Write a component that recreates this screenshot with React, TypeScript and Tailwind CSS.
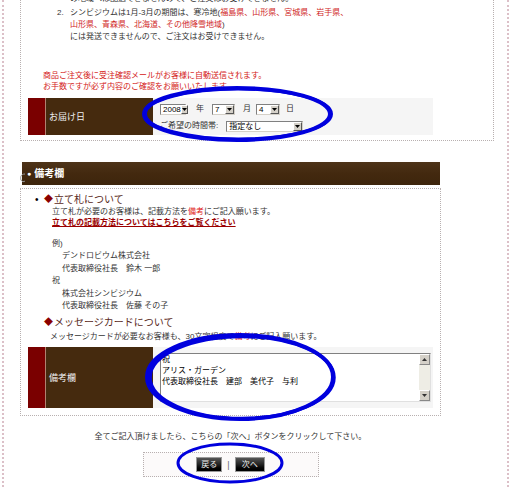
import React from "react";

const Sel = ({ v, w }: { v: string; w: string }) => (
  <span className={`inline-flex h-[11px] ${w} items-stretch border border-[#808080] border-r-[#d4d0c8] border-b-[#d4d0c8] bg-white`}>
    <span className="flex-1 pl-[2px] text-[8px] leading-[9px] text-black">{v}</span>
    <span className="flex w-[9px] items-center justify-center border border-white border-r-[#555] border-b-[#555] bg-[#d4d0c8]">
      <svg width="5" height="3" viewBox="0 0 5 3">
        <path d="M0 0h5L2.5 3z" fill="#000" />
      </svg>
    </span>
  </span>
);

const Heading = ({ children }: { children: React.ReactNode }) => (
  <div className="flex items-center text-[10px] leading-[13px] text-[#5a2a22]">
    <span className="mr-[1px] text-[9px] text-[#8b0000]">◆</span>
    {children}
  </div>
);

const BlackButton = ({ label, w }: { label: string; w: string }) => (
  <span
    className={`flex h-[15px] ${w} items-center justify-center border border-[#999] bg-gradient-to-b from-[#555] via-[#222] to-[#000] text-[8px] text-[#eee]`}
  >
    {label}
  </span>
);

export default function App() {
  return (
    <div className="relative h-[487px] w-[512px] overflow-hidden bg-white font-['Liberation_Sans','Noto_Sans_CJK_JP',sans-serif] text-[8px] leading-[12px] text-[#333]">
      <div className="ml-[2px] min-h-[487px] w-[507px] border-x-2 border-dotted border-[#dcc0c8] pl-[16px]">
        {/* お届け先・注意事項 */}
        <div className="flex h-[141px] w-[474px] flex-col border-x border-b border-dotted border-[#b8b0b0]">
          <div className="-mt-[7px] mb-[2px] pl-[49px]">の地域へは配送できませんので、ご注文はお受けできません。</div>
          <div className="flex pl-[36px]">
            <span className="w-[13px]">2.</span>
            <div>
              <div>
                シンビジウムは1月-3月の期間は、寒冷地(
                <span className="text-[#d02828]">福島県、山形県、宮城県、岩手県、</span>
              </div>
              <div>
                <span className="text-[#d02828]">山形県、青森県、北海道、その他降雪地域</span>)
              </div>
              <div>には発送できませんので、ご注文はお受けできません。</div>
            </div>
          </div>

          <div className="mt-[27px] pl-[22px] leading-[11px] text-[#d42020]">
            <div>商品ご注文後に受注確認メールがお客様に自動送信されます。</div>
            <div>お手数ですが必ず内容のご確認をお願いいたします。</div>
          </div>

          <div className="ml-[7px] mt-[6px] flex h-[37px] w-[405px]">
            <div className="w-[17px] bg-[#7a0000]" />
            <div className="flex w-[108px] items-center border-l border-[#b08070] bg-[#452a0e] pl-[3px] text-[9px] text-[#eee]">
              お届け日
            </div>
            <div className="flex flex-1 flex-col gap-[5px] bg-[#f5f5f5] pl-[7px] pt-[5px]">
              <div className="flex items-center">
                <Sel v="2008" w="w-[26px]" />
                <span className="ml-[10px]">年</span>
                <span className="ml-[8px] flex">
                  <Sel v="7" w="w-[23px]" />
                </span>
                <span className="ml-[8px]">月</span>
                <span className="ml-[5px] flex">
                  <Sel v="4" w="w-[24px]" />
                </span>
                <span className="ml-[6px]">日</span>
              </div>
              <div className="flex items-center">
                <span>ご希望の時間帯:</span>
                <span className="ml-[8px] flex">
                  <Sel v="指定なし" w="w-[77px]" />
                </span>
              </div>
            </div>
          </div>
        </div>

        {/* 備考欄 */}
        <div className="relative ml-[2px] mt-[21px] flex h-[23px] w-[418px] items-center bg-gradient-to-b from-[#4e3419] via-[#43290f] to-[#3d250c] pl-[5px] text-[10px] font-bold text-white">
          <span className="mr-[3px] text-[7px]">●</span>
          備考欄
          <svg className="absolute -left-[3px] top-[11px]" width="7" height="10" viewBox="0 0 7 10">
            <path d="M6 1C2 1 1 4 2 7c1 2 3 2 4 1" fill="none" stroke="#999" strokeWidth="1" />
          </svg>
        </div>
        <div className="mt-[3px] w-[421px] border border-dotted border-[#b8b0b0] pb-[7px] pl-[14px] pt-[4px]">
          <div className="flex">
            <span className="w-[9px] text-[10px] leading-[13px] text-black">•</span>
            <Heading>立て札について</Heading>
          </div>
          <div className="pl-[17px] leading-[11px]">
            <div>
              立て札が必要のお客様は、記載方法を<span className="text-[#e02020]">備考</span>にご記入願います。
            </div>
            <div className="font-bold text-[#9b0000] underline">立て札の記載方法についてはこちらをご覧ください</div>
          </div>
          <div className="mt-[10px] pl-[17px] leading-[12.4px]">
            <div>例)</div>
            <div className="pl-[10px]">デンドロビウム株式会社</div>
            <div className="pl-[10px]">代表取締役社長　鈴木 一郎</div>
            <div>祝</div>
            <div className="pl-[10px]">株式会社シンビジウム</div>
            <div className="pl-[10px]">代表取締役社長　佐藤 その子</div>
          </div>
          <div className="mt-[4px] pl-[9px]">
            <Heading>メッセージカードについて</Heading>
          </div>
          <div className="mt-[2px] pl-[15px] leading-[11px]">
            メッセージカードが必要なお客様も、30文字程度で<span className="text-[#e02020]">備考</span>にご記入願います。
          </div>

          <div className="-ml-[7px] mt-[5px] flex h-[61px] w-[405px]">
            <div className="w-[17px] bg-[#7a0000]" />
            <div className="flex w-[108px] items-center border-l border-[#b08070] bg-[#452a0e] pl-[3px] text-[9px] text-[#eee]">
              備考欄
            </div>
            <div className="flex-1 bg-[#f5f5f5] pl-[7px] pr-[2px] pt-[6px]">
              <div className="flex h-[49px] border border-[#808080] border-r-[#e0e0e0] border-b-[#e0e0e0] bg-white">
                <div className="flex-1 pl-[1px] leading-[11px] text-black">
                  <div>祝</div>
                  <div>アリス・ガーデン</div>
                  <div>代表取締役社長　建部　美代子　与利</div>
                </div>
                <div className="flex w-[11px] flex-col justify-between bg-[#eeede5]">
                  <span className="flex h-[11px] items-center justify-center border border-white border-r-[#888] border-b-[#888] bg-[#d4d0c8]">
                    <svg width="5" height="3" viewBox="0 0 5 3">
                      <path d="M0 3h5L2.5 0z" fill="#333" />
                    </svg>
                  </span>
                  <span className="flex h-[11px] items-center justify-center border border-white border-r-[#888] border-b-[#888] bg-[#d4d0c8]">
                    <svg width="5" height="3" viewBox="0 0 5 3">
                      <path d="M0 0h5L2.5 3z" fill="#333" />
                    </svg>
                  </span>
                </div>
              </div>
            </div>
          </div>
        </div>

        {/* 次へ */}
        <div className="w-[421px]">
          <div className="mt-[15px] text-center">全てご記入頂けましたら、こちらの「次へ」ボタンをクリックして下さい。</div>
          <div className="mx-auto mt-[9px] flex h-[25px] w-[176px] items-center justify-center gap-[5px] border border-dotted border-[#b8b0b0] bg-[#fcfafa]">
            <BlackButton label="戻る" w="w-[26px]" />
            <span className="text-[9px] text-[#666]">|</span>
            <BlackButton label="次へ" w="w-[30px]" />
          </div>
        </div>
      </div>

      {/* 青い丸印 */}
      <svg className="pointer-events-none absolute inset-0" width="512" height="487" viewBox="0 0 512 487">
        <ellipse cx="237" cy="114" rx="93" ry="26" fill="none" stroke="#0000dd" strokeWidth="4" />
        <ellipse cx="238.5" cy="114" rx="93" ry="25" fill="none" stroke="#0000dd" strokeWidth="3" />
        <ellipse cx="240" cy="377" rx="93" ry="42" fill="none" stroke="#0000dd" strokeWidth="4" />
        <ellipse cx="242" cy="377.5" rx="92" ry="41" fill="none" stroke="#0000dd" strokeWidth="3.5" />
        <ellipse cx="230" cy="463" rx="52" ry="19" fill="none" stroke="#0000dd" strokeWidth="3" />
      </svg>
    </div>
  );
}
